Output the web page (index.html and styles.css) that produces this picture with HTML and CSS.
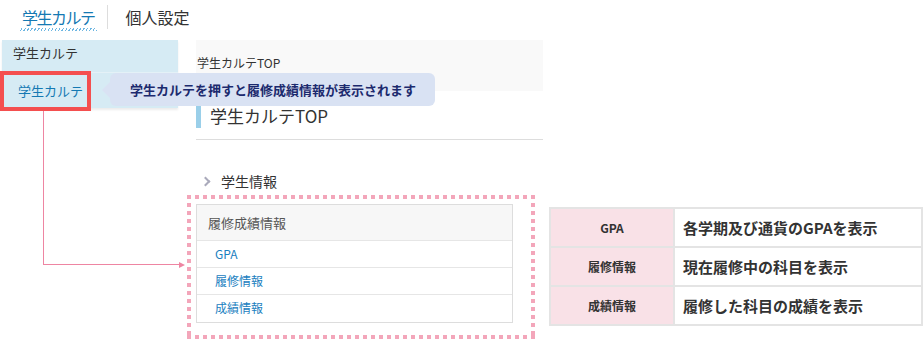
FILE: index.html
```html
<!DOCTYPE html>
<html lang="ja">
<head>
  <meta charset="UTF-8" />
  <meta name="viewport" content="width=device-width, initial-scale=1.0"/>
  <title>学生カルテ</title>
  <link rel="stylesheet" href="styles.css">
</head>
<body>
  <div class="tabs">
    <a class="tab active" href="#">学生カルテ</a>
    <span class="tab-sep"></span>
    <a class="tab" href="#">個人設定</a>
  </div>

  <div class="layout">
    <div class="sidebar">
      <div class="side-item">学生カルテ</div>
      <div class="side-item current">学生カルテ</div>
    </div>

    <div class="main">
      <div class="crumb">学生カルテTOP</div>
      <h1 class="page-title">学生カルテTOP</h1>
      <hr class="rule">

      <div class="section-title"><span class="chev"></span>学生情報</div>

      <div class="panel-wrap">
        <div class="panel">
          <div class="panel-head">履修成績情報</div>
          <a class="panel-row" href="#">GPA</a>
          <a class="panel-row" href="#">履修情報</a>
          <a class="panel-row" href="#">成績情報</a>
        </div>
      </div>
    </div>
  </div>

  <!-- annotations -->
  <div class="mark"></div>
  <div class="tip">学生カルテを押すと履修成績情報が表示されます</div>
  <div class="connector"></div>

  <table class="legend">
    <tr><th>GPA</th><td>各学期及び通貨のGPAを表示</td></tr>
    <tr><th>履修情報</th><td>現在履修中の科目を表示</td></tr>
    <tr><th>成績情報</th><td>履修した科目の成績を表示</td></tr>
  </table>
</body>
</html>
```

FILE: styles.css
```css
* {
  box-sizing: border-box;
}

body {
  margin: 0;
  background: #fff;
  color: #333;
  font-family: "Noto Sans CJK JP", "Noto Sans", sans-serif;
  position: relative;
  width: 923px;
  height: 352px;
  overflow: hidden;
}

a {
  text-decoration: none;
}

/* top tabs */
.tabs {
  height: 40px;
  display: flex;
  align-items: flex-start;
  padding-left: 20px;
}

.tab {
  font-size: 16px;
  line-height: 20px;
  padding: 7px 2px 4px;
  color: #333;
}

.tab.active {
  color: #1479b3;
  letter-spacing: -1.5px;
  background: repeating-linear-gradient(-60deg, #6cb6e2 0 1px, transparent 1px 3px) left 28px / 100% 3px no-repeat;
  padding-bottom: 6px;
}

.tab-sep {
  width: 1px;
  height: 24px;
  background: #ddd;
  margin: 5px 16px 0 10px;
}

/* body layout */
.layout {
  display: flex;
  gap: 18px;
  padding-left: 2px;
}

.sidebar {
  width: 176px;
  background: #d6ebf4;
  box-shadow: 0 2px 2px rgba(0,0,0,0.08);
  height: 68px;
}

.side-item {
  font-size: 13px;
  height: 32px;
  line-height: 26px;
  padding-left: 11px;
  color: #333;
}

.side-item.current {
  height: 36px;
  line-height: 36px;
  padding-left: 16px;
  color: #1479b3;
  border-top: 1px solid #e4f1f7;
}

.main {
  width: 347px;
}

.crumb {
  background: #f9f9f9;
  height: 51px;
  font-size: 12px;
  padding: 14px 0 0 1px;
  line-height: 18px;
}

.page-title {
  margin: 12px 0 0;
  font-size: 17px;
  font-weight: normal;
  line-height: 25px;
  border-left: 5px solid #9acfe9;
  padding-left: 9px;
}

.rule {
  border: 0;
  border-top: 1px solid #ddd;
  margin: 11px 0 0;
}

.section-title {
  margin-top: 31px;
  font-size: 14px;
  line-height: 20px;
  display: flex;
  align-items: center;
  padding-left: 6px;
}

.chev {
  width: 7px;
  height: 7px;
  border-top: 2px solid #aab;
  border-right: 2px solid #aab;
  transform: rotate(45deg);
  margin-right: 12px;
}

.panel-wrap {
  position: relative;
  margin-top: 13px;
  width: 317px;
}

/* square-dotted frame round the panel */
.panel-wrap::before {
  content: "";
  position: absolute;
  left: -9px;
  top: -9px;
  right: -22px;
  bottom: -16px;
  background:
    repeating-linear-gradient(to right, #f3a6ba 0 4px, transparent 4px 8px) left top / 100% 4px no-repeat,
    repeating-linear-gradient(to right, #f3a6ba 0 4px, transparent 4px 8px) left bottom / 100% 4px no-repeat,
    repeating-linear-gradient(to bottom, #f3a6ba 0 4px, transparent 4px 8px) left top / 4px 100% no-repeat,
    repeating-linear-gradient(to bottom, #f3a6ba 0 4px, transparent 4px 8px) right top / 4px 100% no-repeat;
}

.panel {
  border: 1px solid #ddd;
  background: #fff;
  position: relative;
}

.panel-head {
  background: #f7f7f7;
  height: 36px;
  line-height: 36px;
  font-size: 13px;
  color: #555;
  padding-left: 11px;
  border-bottom: 1px solid #e6e6e6;
}

.panel-row {
  display: block;
  height: 27px;
  line-height: 26px;
  font-size: 12px;
  color: #1a80c0;
  padding-left: 18px;
  border-bottom: 1px solid #e6e6e6;
}

.panel-row:last-child {
  border-bottom: 0;
}

/* annotations */
.mark {
  position: absolute;
  left: 0;
  top: 71px;
  width: 91px;
  height: 40px;
  border: 4px solid #f44f4f;
}

.tip {
  position: absolute;
  left: 110px;
  top: 73px;
  width: 325px;
  height: 33px;
  background: #d9e2f3;
  border-radius: 6px;
  font-size: 13px;
  font-weight: bold;
  line-height: 33px;
  color: #1c2a6e;
  padding-left: 20px;
}

.tip::before {
  content: "";
  position: absolute;
  left: -8px;
  top: 9px;
  border-top: 8px solid transparent;
  border-bottom: 8px solid transparent;
  border-right: 8px solid #d9e2f3;
}

.connector {
  position: absolute;
  left: 43px;
  top: 111px;
  width: 138px;
  height: 154px;
  border-left: 1px solid #ee85a2;
  border-bottom: 1px solid #ee85a2;
}

.connector::after {
  content: "";
  position: absolute;
  right: -4px;
  bottom: -4px;
  border-top: 3.5px solid transparent;
  border-bottom: 3.5px solid transparent;
  border-left: 6px solid #ee85a2;
}

.legend {
  position: absolute;
  left: 549px;
  top: 207px;
  width: 374px;
  border-collapse: collapse;
}

.legend th,
.legend td {
  border: 2px solid #e4e4e4;
  height: 39px;
  font-weight: bold;
}

.legend th {
  width: 124px;
  background: #f9e1e7;
  font-size: 12px;
  color: #333;
  text-align: center;
}

.legend td {
  font-size: 15px;
  color: #333;
  padding-left: 8px;
  background: #fff;
}
```
